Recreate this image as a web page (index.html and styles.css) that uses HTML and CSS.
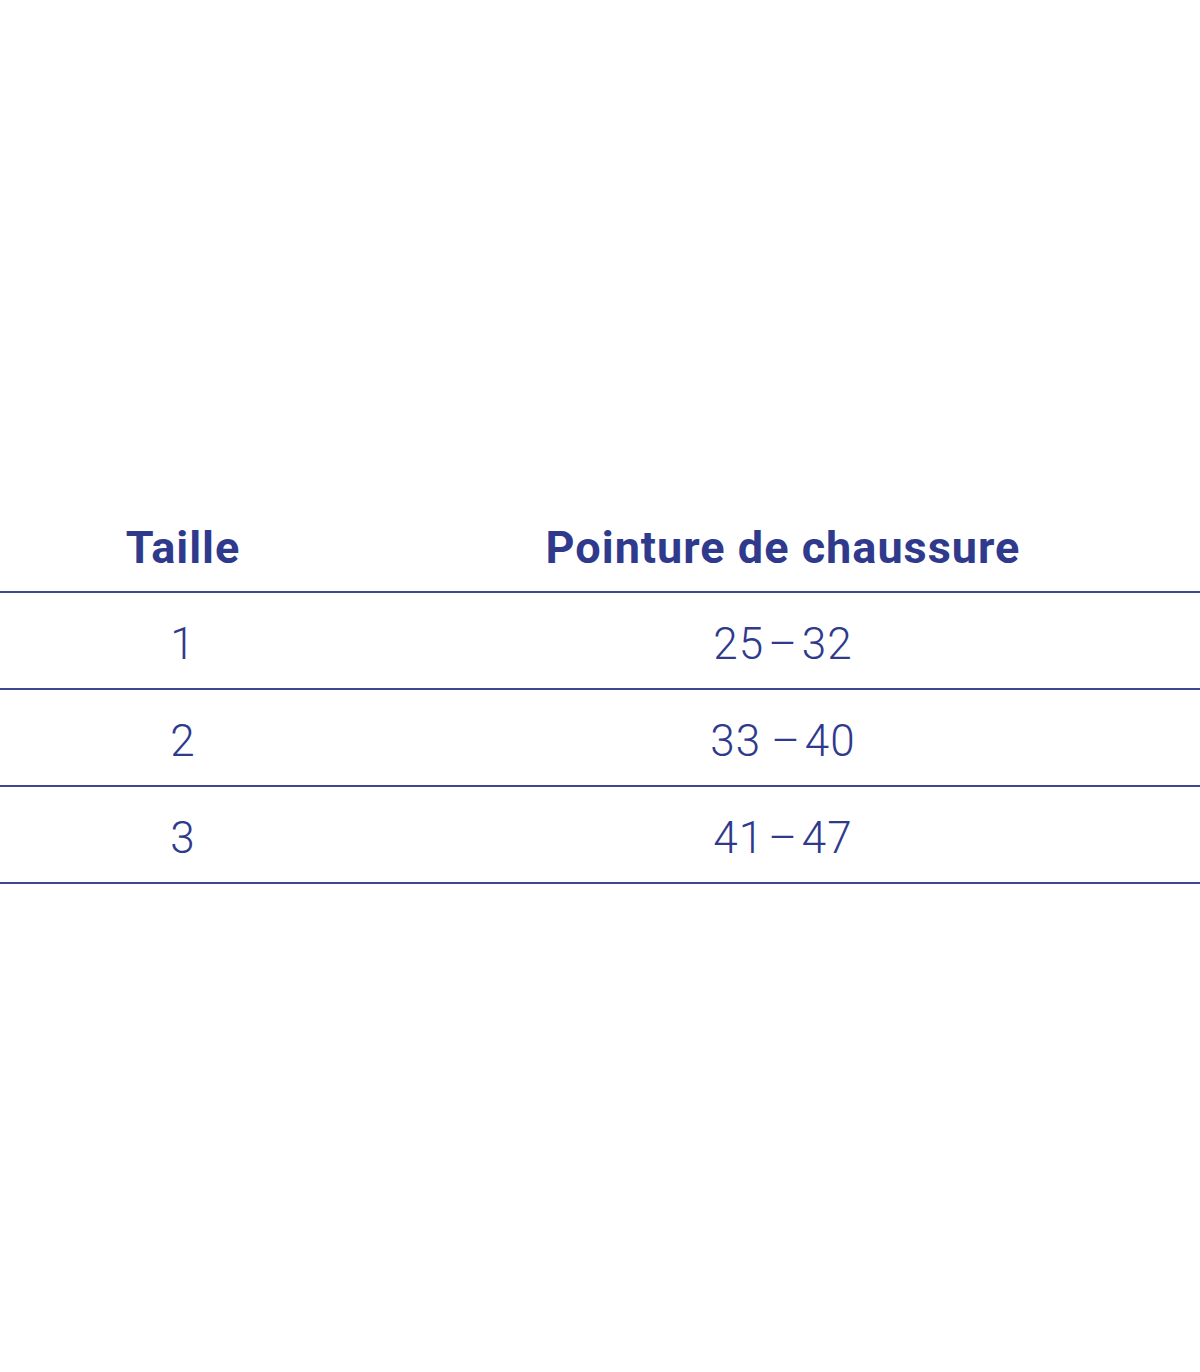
FILE: index.html
```html
<!DOCTYPE html>
<html lang="fr">
<head>
<meta charset="utf-8">
<link rel="stylesheet" href="styles.css">
</head>
<body>
<main class="page">
  <table class="sizes">
    <thead>
      <tr><th class="c1">Taille</th><th class="c2">Pointure de chaussure</th></tr>
    </thead>
    <tbody>
      <tr><td class="c1">1</td><td class="c2">25<span class="dash">–</span>32</td></tr>
      <tr><td class="c1">2</td><td class="c2">33<span class="dash dash-wide">–</span>40</td></tr>
      <tr><td class="c1">3</td><td class="c2">41<span class="dash">–</span>47</td></tr>
    </tbody>
  </table>
</main>
</body>
</html>
```
FILE: styles.css
```css
html, body { margin: 0; padding: 0; background: #fff; }
.page { padding-top: 496px; width: 1200px; }
.sizes {
  width: 1200px;
  border-collapse: collapse;
  color: #2f3a8d;
  font-family: Roboto, "Liberation Sans", sans-serif;
}
.sizes th, .sizes td {
  padding: 0;
  text-align: center;
  vertical-align: middle;
  border-bottom: 2px solid #3d4794;
}
.sizes .c1 { width: 366px; }
.sizes .c2 { width: 834px; }
.sizes th {
  font-size: 45px;
  font-weight: 700;
  letter-spacing: 1px;
  padding-top: 8px;
  height: 87px;
}
.sizes td {
  font-size: 44px;
  font-weight: 300;
  letter-spacing: 1px;
  padding-top: 6px;
  height: 89px;
}
.dash { margin: 0 4px; }
.dash-wide { margin-left: 10px; }
```
